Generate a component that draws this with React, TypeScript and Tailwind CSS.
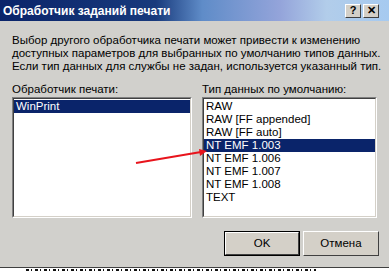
import React from "react";

const FONT = { fontFamily: '"Liberation Sans", Arial, sans-serif' };

const handlers = ["WinPrint"];
const dataTypes = [
  "RAW",
  "RAW [FF appended]",
  "RAW [FF auto]",
  "NT EMF 1.003",
  "NT EMF 1.006",
  "NT EMF 1.007",
  "NT EMF 1.008",
  "TEXT",
];

function CaptionButton({ children }: { children: React.ReactNode }) {
  return (
    <div className="flex h-[14px] w-[16px] items-center justify-center border border-t-white border-l-white border-r-[#404040] border-b-[#404040] bg-[#d4d0c8] text-[11px] font-bold leading-none text-black">
      {children}
    </div>
  );
}

function ListBox({ items, selected, className }: { items: string[]; selected: number; className: string }) {
  return (
    <div className={`border border-t-[#808080] border-l-[#808080] border-r-white border-b-white ${className}`}>
      <div className="h-full border border-t-[#404040] border-l-[#404040] border-r-[#d4d0c8] border-b-[#d4d0c8] bg-white pt-px">
        {items.map((it, i) => (
          <div
            key={it}
            className={`h-[13px] pl-[2px] text-[11.5px] leading-[13px] ${i === selected ? "bg-[#0a246a] text-white" : "text-black"}`}
          >
            {it}
          </div>
        ))}
      </div>
    </div>
  );
}

function Button({ label, isDefault }: { label: string; isDefault?: boolean }) {
  return (
    <div className={`h-[25px] w-[76px] ${isDefault ? "border border-black" : ""}`}>
      <div className="flex h-full items-center justify-center border border-t-white border-l-white border-r-[#404040] border-b-[#404040] bg-[#d4d0c8] text-[11.5px] text-black">
        {label}
      </div>
    </div>
  );
}

export default function App() {
  return (
    <div className="relative flex h-[271px] w-[389px] flex-col overflow-hidden bg-[#d1d0cc]" style={FONT}>
      {/* title bar */}
      <div className="flex h-[21px] items-center justify-between bg-[linear-gradient(to_right,#0a246a_0%,#183a7c_40%,#5f8cc8_52%,#94a4da_72%,#b2cdea_84%,#a6caf0_100%)] pl-[3px] pr-[10px]">
        <span className="text-[12px] font-bold text-white">Обработчик заданий печати</span>
        <div className="flex gap-[2px]">
          <CaptionButton>?</CaptionButton>
          <CaptionButton>✕</CaptionButton>
        </div>
      </div>

      <div className="pl-[12px] pt-[13px] text-[11.5px] leading-[13px] text-black">
        <p>Выбор другого обработчика печати может привести к изменению</p>
        <p>доступных параметров для выбранных по умолчанию типов данных.</p>
        <p>Если тип данных для службы не задан, используется указанный тип.</p>
      </div>

      <div className="mt-[10px] flex pl-[12px] text-[11.5px] leading-[13px] text-black">
        <div className="flex w-[190px] flex-col gap-[1px]">
          <span>Обработчик печати:</span>
          <ListBox items={handlers} selected={0} className="h-[121px] w-[180px]" />
        </div>
        <div className="flex flex-col gap-[1px]">
          <span>Тип данных по умолчанию:</span>
          <ListBox items={dataTypes} selected={3} className="h-[121px] w-[175px]" />
        </div>
      </div>

      <div className="mt-[13px] flex justify-end gap-[3px] pr-[10px]">
        <Button label="OK" isDefault />
        <Button label="Отмена" />
      </div>

      {/* edge of the window behind the dialog */}
      <div className="mt-auto h-px bg-[#404040]" />
      <div className="flex h-[3px] bg-white pl-[26px] pt-px">
        <div className="h-[2px] w-[290px] bg-[repeating-linear-gradient(to_right,#111_0px,#111_3px,transparent_3px,transparent_5px,#111_5px,#111_6px,transparent_6px,transparent_9px)]" />
      </div>

      {/* red pointer arrow */}
      <svg className="pointer-events-none absolute left-0 top-0" width="389" height="271">
        <line x1="136" y1="163" x2="201" y2="152" stroke="#e8141c" strokeWidth="2" />
        <polygon points="207,151 199,149 200,156" fill="#e8141c" />
      </svg>
    </div>
  );
}
